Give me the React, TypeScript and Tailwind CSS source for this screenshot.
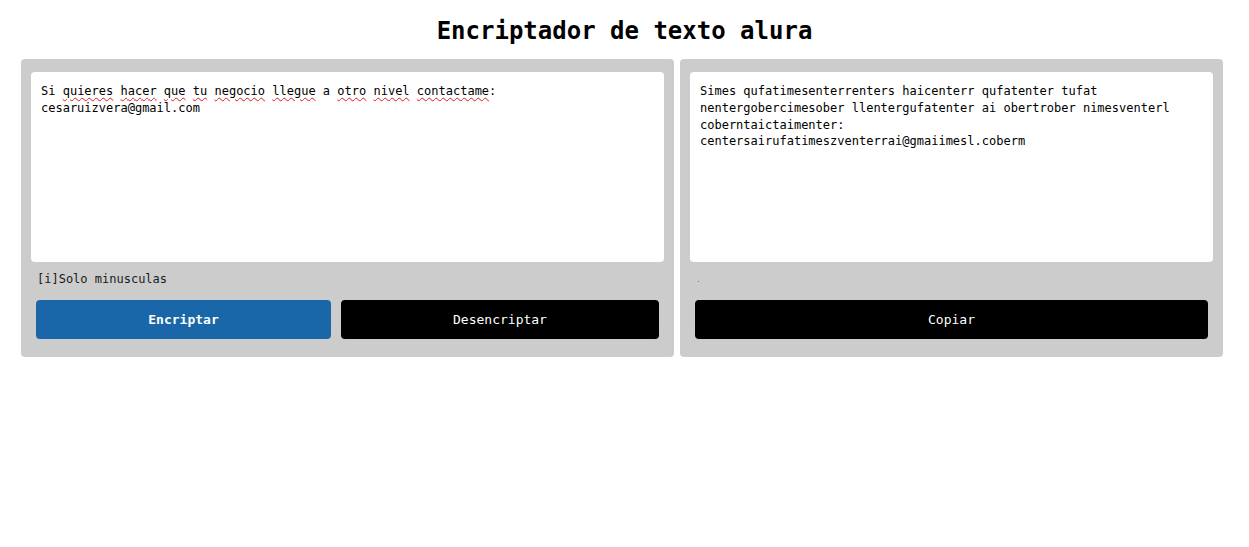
const mono = "font-['DejaVu_Sans_Mono',monospace]";

function Misspelled({ children }: { children: string }) {
  return (
    <span className="underline decoration-wavy decoration-[#e01b1b] decoration-1 underline-offset-2">
      {children}
    </span>
  );
}

export default function App() {
  return (
    <div className={`${mono} min-h-[547px] bg-white text-black`}>
      <h1 className="pt-[17px] text-center text-[24px] font-bold leading-[28px]">
        Encriptador de texto alura
      </h1>

      <main className="mt-[14px] flex gap-[6px] pl-[21px]">
        {/* entrada */}
        <section className="w-[653px] rounded-[4px] bg-[#cccccc] px-[10px] pt-[13px] pb-[18px]">
          <div className="h-[190px] rounded-[4px] bg-white px-[10px] pt-[11px] text-[12px] leading-[16.8px]">
            Si <Misspelled>quieres</Misspelled> <Misspelled>hacer</Misspelled>{" "}
            <Misspelled>que</Misspelled> <Misspelled>tu</Misspelled>{" "}
            <Misspelled>negocio</Misspelled> <Misspelled>llegue</Misspelled> a{" "}
            <Misspelled>otro</Misspelled> <Misspelled>nivel</Misspelled>{" "}
            <Misspelled>contactame</Misspelled>:
            <br />
            cesaruizvera@gmail.com
          </div>
          <p className="mt-[9px] pl-[6px] text-[12px] leading-[16px] text-[#1a1a1a]">
            [i]Solo minusculas
          </p>
          <div className="mt-[13px] flex gap-[10px] px-[5px]">
            <button className="h-[39px] w-[295px] rounded-[4px] bg-[#1967a8] text-[13px] font-bold text-white">
              Encriptar
            </button>
            <button className="h-[39px] w-[318px] rounded-[4px] bg-black text-[13px] text-white">
              Desencriptar
            </button>
          </div>
        </section>

        {/* salida */}
        <section className="w-[543px] rounded-[4px] bg-[#cccccc] px-[10px] pt-[13px] pb-[18px]">
          <div className="h-[190px] rounded-[4px] bg-white px-[10px] pt-[11px] text-[12px] leading-[16.8px]">
            Simes qufatimesenterrenters haicenterr qufatenter tufat
            nentergobercimesober llentergufatenter ai obertrober nimesventerl
            coberntaictaimenter:
            <br />
            centersairufatimeszventerrai@gmaiimesl.coberm
          </div>
          <div className="mt-[9px] flex h-[16px] items-center pl-[8px]">
            <span className="mt-[5px] h-px w-px bg-[#4a82c0]" />
          </div>
          <div className="mt-[13px] flex px-[5px]">
            <button className="h-[39px] w-full rounded-[4px] bg-black text-[13px] text-white">
              Copiar
            </button>
          </div>
        </section>
      </main>
    </div>
  );
}
